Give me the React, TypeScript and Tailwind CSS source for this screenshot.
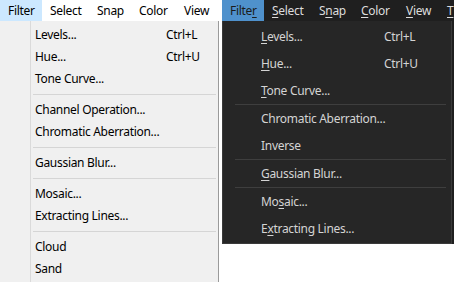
const lightBar = [
  { label: "Filter", w: "w-[42px]" },
  { label: "Select", w: "w-[47px]" },
  { label: "Snap", w: "w-[42px]" },
  { label: "Color", w: "w-[45px]" },
  { label: "View", w: "w-[41px]" },
];

const darkBar = [
  { label: "Filte&r", w: "w-[42px]" },
  { label: "&Select", w: "w-[47px]" },
  { label: "S&nap", w: "w-[42px]" },
  { label: "&Color", w: "w-[45px]" },
  { label: "&View", w: "w-[41px]" },
  { label: "&T", w: "w-[15px]" },
];

type Item = { label: string; sc?: string } | "sep";

const lightItems: Item[] = [
  { label: "Levels...", sc: "Ctrl+L" },
  { label: "Hue...", sc: "Ctrl+U" },
  { label: "Tone Curve..." },
  "sep",
  { label: "Channel Operation..." },
  { label: "Chromatic Aberration..." },
  "sep",
  { label: "Gaussian Blur..." },
  "sep",
  { label: "Mosaic..." },
  { label: "Extracting Lines..." },
  "sep",
  { label: "Cloud" },
  { label: "Sand" },
];

const darkItems: Item[] = [
  { label: "&Levels...", sc: "Ctrl+L" },
  { label: "&Hue...", sc: "Ctrl+U" },
  { label: "&Tone Curve..." },
  "sep",
  { label: "Chromatic Aberration..." },
  { label: "Inverse" },
  "sep",
  { label: "&Gaussian Blur..." },
  "sep",
  { label: "Mo&saic..." },
  { label: "E&xtracting Lines..." },
];

// "&" marks the mnemonic letter, like a Windows menu resource
const Mnemonic = ({ text }: { text: string }) => {
  const i = text.indexOf("&");
  if (i < 0) return <>{text}</>;
  return (
    <>
      {text.slice(0, i)}
      <span className="underline underline-offset-[2px] decoration-1">{text[i + 1]}</span>
      {text.slice(i + 2)}
    </>
  );
};

const LightPane = () => (
  <div className="w-[222px] shrink-0 h-full flex flex-col bg-white">
    <div className="h-[21px] w-[217px] flex bg-white">
      {lightBar.map((m, i) => (
        <div
          key={m.label}
          className={`${m.w} h-full flex items-center pl-2 text-black ${i === 0 ? "bg-[#cce8ff]" : ""}`}
        >
          {m.label}
        </div>
      ))}
    </div>
    <div className="flex flex-1">
      <div className="w-[30px] bg-[#f0f0f0]" />
      <div className="w-[189px] bg-[#f0f0f0] border-l border-l-[#dadada] border-r border-r-[#9a9a9a] pt-[3px]">
        {lightItems.map((it, i) =>
          it === "sep" ? (
            <div key={i} className="h-[9px] flex items-center px-[2px]">
              <div className="h-px w-full bg-[#d5d5d5]" />
            </div>
          ) : (
            <div key={i} className="h-[22px] flex items-center pl-[4px] text-black whitespace-nowrap">
              <span className="w-[131px] shrink-0">{it.label}</span>
              <span>{it.sc}</span>
            </div>
          )
        )}
      </div>
      <div className="w-[3px] bg-white" />
    </div>
  </div>
);

const DarkPane = () => (
  <div className="w-[232px] shrink-0 h-full flex flex-col bg-white overflow-hidden">
    <div className="h-[21px] flex bg-[#1f1f1f] text-[#dcdcdc]">
      {darkBar.map((m, i) => (
        <div
          key={m.label}
          className={`${m.w} shrink-0 h-full flex items-center pl-2 ${i === 0 ? "bg-[#4f91cc] text-[#1b1b1b]" : ""}`}
        >
          <Mnemonic text={m.label} />
        </div>
      ))}
    </div>
    <div className="h-[223px] bg-[#1f1f1f] pr-[2px]">
      <div className="h-full bg-[#262626] border border-t-0 border-[#3a3a3a] pt-[2px] text-[#d4d4d4]">
        {darkItems.map((it, i) =>
          it === "sep" ? (
            <div key={i} className="h-px ml-[12px] mr-[5px] bg-[#3e3e3e]" />
          ) : (
            <div key={i} className="h-[27px] flex items-center pl-[38px] whitespace-nowrap">
              <span className="w-[123px] shrink-0">
                <Mnemonic text={it.label} />
              </span>
              <span>{it.sc}</span>
            </div>
          )
        )}
      </div>
    </div>
  </div>
);

export default function App() {
  return (
    <div className="w-[454px] h-[282px] flex overflow-hidden text-[12px] leading-none tracking-[-0.3px] font-['Noto_Sans',sans-serif]">
      <LightPane />
      <DarkPane />
    </div>
  );
}
